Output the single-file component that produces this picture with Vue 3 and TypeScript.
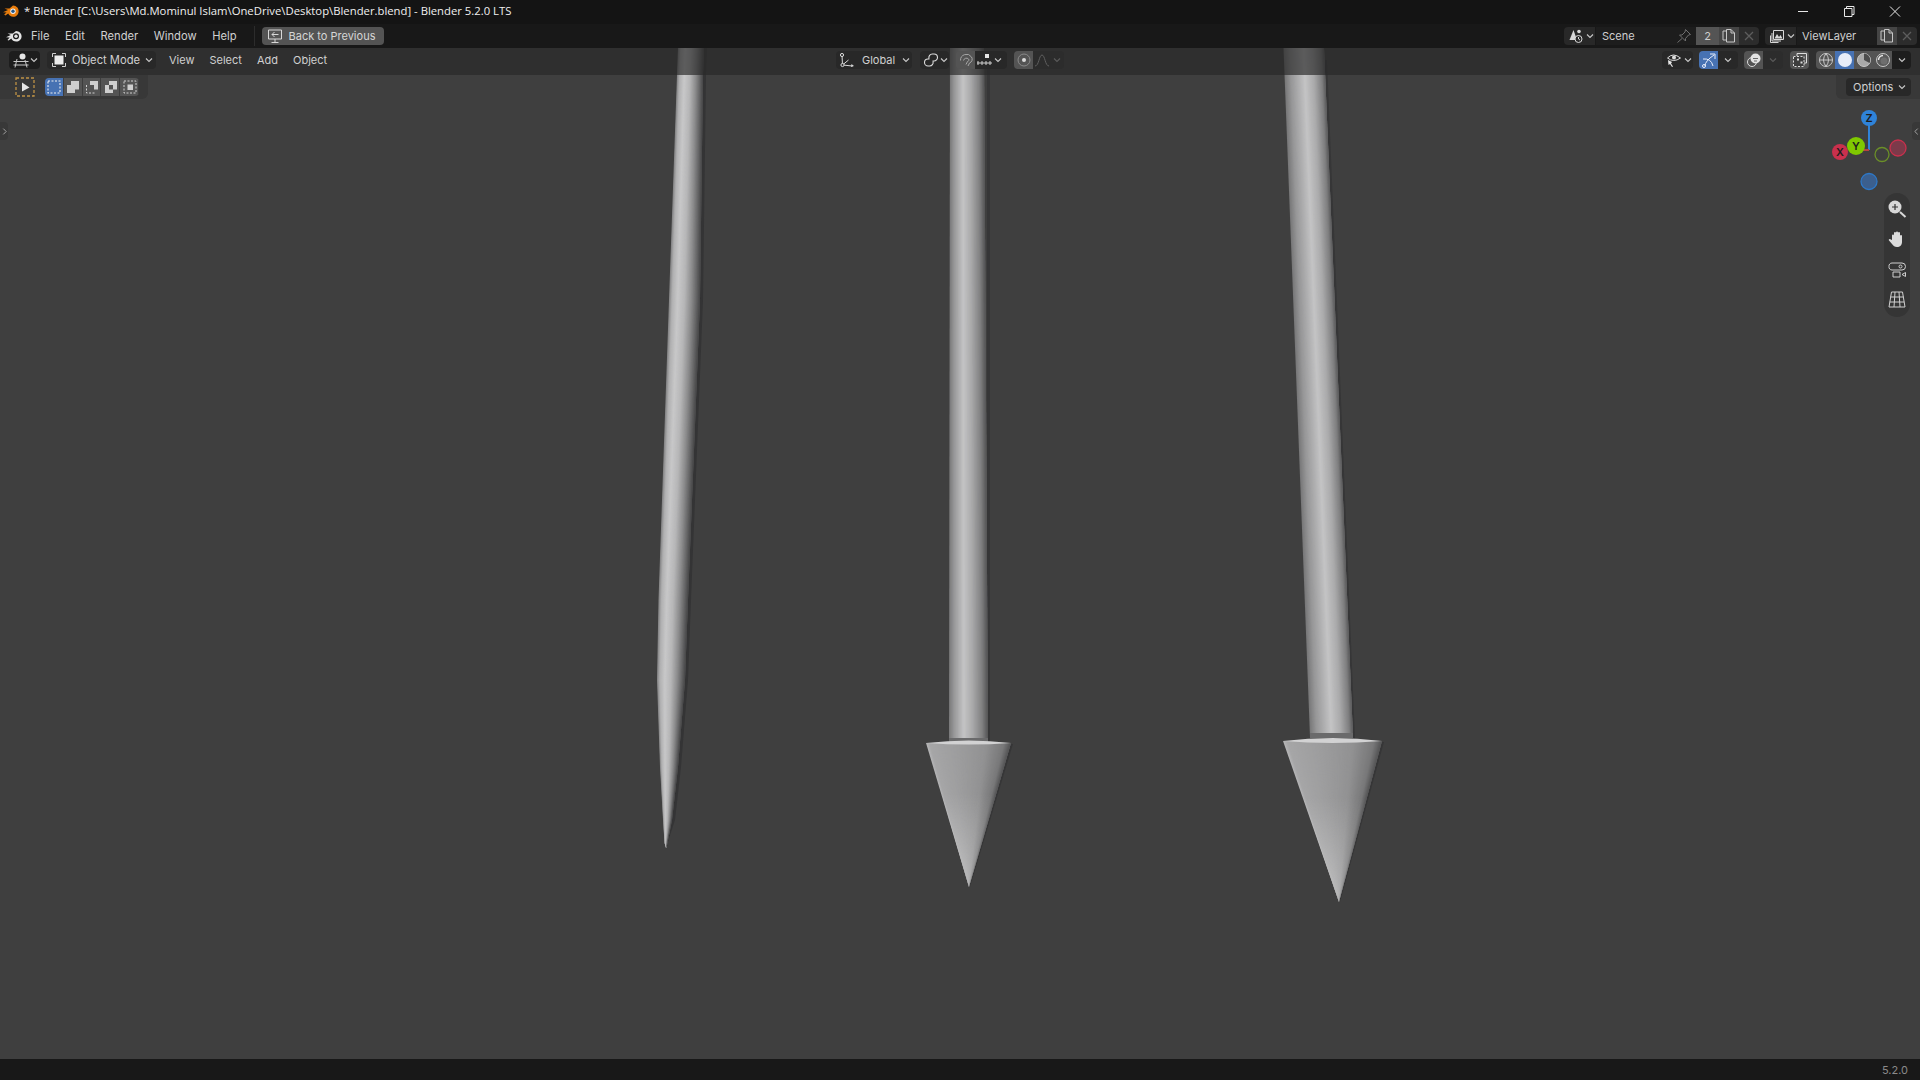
<script setup lang="ts">
type Station = [number, number, number]

const menus = ['File', 'Edit', 'Render', 'Window', 'Help']
const headerMenus = ['View', 'Select', 'Add', 'Object']
const selectModes = [0, 1, 2, 3, 4]

function grey(stops: [number, number][], t: number) {
  let v = stops[stops.length - 1][1]
  for (let i = 0; i < stops.length - 1; i++) {
    const [a, va] = stops[i]
    const [b, vb] = stops[i + 1]
    if (t >= a && t <= b) {
      v = va + ((vb - va) * (t - a)) / (b - a)
      break
    }
  }
  const n = Math.round(v)
  return `rgb(${n},${n},${n + 1})`
}

// strips overlap the next few so the seams stay hidden and the outer edge stays antialiased
function rodStrips(stations: Station[], stops: [number, number][], count = 48) {
  const out: { points: string; fill: string }[] = []
  for (let i = 0; i < count; i++) {
    const a = i / count
    const b = Math.min(1, (i + 3) / count)
    const left = stations.map(([y, l, r]) => `${(l + (r - l) * a).toFixed(2)},${y}`)
    const right = stations.map(([y, l, r]) => `${(l + (r - l) * b).toFixed(2)},${y}`).reverse()
    out.push({ points: [...left, ...right].join(' '), fill: grey(stops, a + 0.5 / count) })
  }
  return out
}

function coneStrips(topY: number, l: number, r: number, tipX: number, tipY: number, stops: [number, number][], count = 80) {
  const out: { points: string; fill: string }[] = []
  for (let i = 0; i < count; i++) {
    const a = i / count
    const b = Math.min(1, (i + 3) / count)
    out.push({
      points: `${l + (r - l) * a},${topY} ${l + (r - l) * b},${topY} ${tipX},${tipY}`,
      fill: grey(stops, a + 0.5 / count),
    })
  }
  return out
}

const rod1Stations: Station[] = [
  [48, 678, 704], [75, 677, 703], [300, 669, 700], [600, 658.5, 688],
  [680, 657, 685], [767, 660, 678], [820, 663, 672], [843, 664.5, 667.5], [848, 666, 666.5],
]
const rod2Stations: Station[] = [[48, 950, 984], [742, 949, 988]]
const rod3Stations: Station[] = [[48, 1283.5, 1324], [737, 1310, 1353]]

const rod1Shade: [number, number][] = [[0, 128], [0.1, 176], [0.28, 200], [0.5, 182], [0.72, 140], [0.9, 96], [1, 70]]
const rod2Shade: [number, number][] = [[0, 120], [0.12, 150], [0.38, 196], [0.6, 170], [0.85, 128], [1, 84]]
const rod3Shade: [number, number][] = [[0, 118], [0.15, 150], [0.5, 196], [0.72, 170], [0.92, 126], [1, 90]]
const coneShade: [number, number][] = [[0, 182], [0.04, 166], [0.4, 156], [0.7, 146], [0.92, 120], [1, 84]]

const rods = [
  ...rodStrips(rod1Stations, rod1Shade),
  ...rodStrips(rod2Stations, rod2Shade),
  ...rodStrips(rod3Stations, rod3Shade),
  ...coneStrips(743, 926, 1011, 969, 887, coneShade),
  ...coneStrips(741, 1283, 1382, 1339, 902, coneShade),
]

const rod1Shadow = [
  ...rod1Stations.map(([y, , r]) => `${r - 1},${y}`),
  ...[...rod1Stations].reverse().map(([y, , r]) => `${r + (y < 830 ? 3 : 0)},${y}`),
].join(' ')
</script>

<template>
  <div class="app">
    <div class="titlebar">
      <svg class="title-logo" viewBox="0 0 16 14">
        <path d="M0 8.200 5 6 1.500 4.400h5L10 1.600c3.600.4 5.600 2.600 5.600 5.600 0 3.200-2.400 5.600-5.400 5.600-2.400 0-4.200-1.200-5-3.200L2.400 11.400 1.200 10.600 3.600 8.400Z" fill="#e87d0d" />
        <circle cx="10" cy="7.200" r="2.700" fill="#f2f2f2" />
        <circle cx="10" cy="7.200" r="1.700" fill="#265787" />
      </svg>
      <span class="title-text">* Blender [C:\Users\Md.Mominul Islam\OneDrive\Desktop\Blender.blend] - Blender 5.2.0 LTS</span>
      <div class="win-controls">
        <svg viewBox="0 0 46 20"><path d="M18 10.500h10" stroke="#e8e8e8" fill="none" /></svg>
        <svg viewBox="0 0 46 20"><path d="M18.500 7.500h7.500v8h-7.500Z M20.500 7.500v-2h7.500v8h-2" stroke="#e8e8e8" fill="none" /></svg>
        <svg viewBox="0 0 46 20"><path d="M18 5.500l10 10M28 5.500l-10 10" stroke="#e8e8e8" fill="none" /></svg>
      </div>
    </div>

    <div class="topbar">
      <svg class="app-logo" viewBox="0 0 16 14">
        <path d="M0 8.200 4.800 6 1.600 4.500h5.200L10 2c3.400.2 5.600 2.400 5.600 5.300 0 3.100-2.400 5.300-5.400 5.300-2.300 0-4.100-1.200-4.900-3L2.600 11.600 1.500 10.900 3.700 8.400Z" fill="#e4e4e4" />
        <circle cx="10" cy="7.300" r="3" fill="#181818" />
        <circle cx="10" cy="7.300" r="1.700" fill="#e4e4e4" />
      </svg>
      <nav class="menus">
        <span v-for="m in menus" :key="m">{{ m }}</span>
      </nav>
      <i class="top-sep"></i>
      <button class="back-btn">
        <svg viewBox="0 0 16 16" class="ic16">
          <path d="M1.500 2h13v9h-13ZM8 11v3M4.500 14.500h7M11.500 6.500H5M7.500 4 5 6.500 7.500 9" fill="none" stroke="#d8d8d8" />
        </svg>
        <span>Back to Previous</span>
      </button>
      <div class="top-right">
        <div class="field-group">
          <span class="drop dark-a">
            <svg viewBox="0 0 16 16" class="ic16">
              <path d="M5.500 2 9 12H1.500Z" fill="#d8d8d8" />
              <circle cx="11" cy="3.500" r="1.800" fill="#d8d8d8" />
              <circle cx="10.500" cy="11" r="3.500" fill="#282828" stroke="#d8d8d8" />
              <path d="M10.500 9v2l1.500 1" stroke="#d8d8d8" fill="none" />
            </svg>
            <svg viewBox="0 0 8 6" class="chev"><path d="M1 1.500l3 3 3-3" /></svg>
          </span>
          <span class="name-field scene">
            <span>Scene</span>
            <svg viewBox="0 0 16 16" class="ic16 pin"><path d="M9.500 1.500 14.500 6.500 12.500 7 9.500 10.500 9.500 13 3.500 7 6 7 9 4ZM6 10.500 1.500 14.500" fill="none" stroke="#6f6f6f" /></svg>
          </span>
          <span class="tb-btn num">2</span>
          <span class="tb-btn copy">
            <svg viewBox="0 0 16 16" class="ic16"><path d="M5.500 12H2V3h3.500M5.500 1.500H10l3.500 3.500V14h-8Z M10 1.500V5h3.500" fill="none" stroke="#c8c8c8" /></svg>
          </span>
          <span class="tb-btn cross"><svg viewBox="0 0 12 12" class="ic12"><path d="M2 2l8 8M10 2l-8 8" stroke="#5d5d5d" fill="none" stroke-width="1.300" /></svg></span>
        </div>
        <div class="field-group">
          <span class="drop dark-a">
            <svg viewBox="0 0 16 16" class="ic16">
              <path d="M4.500 2.500h10v9h-10ZM3 5v8h9M1.500 7.500v7h8" fill="none" stroke="#d8d8d8" />
              <path d="M5.500 10.500 8 6l2 3 1.500-2 2 3.500Z" fill="#d8d8d8" />
            </svg>
            <svg viewBox="0 0 8 6" class="chev"><path d="M1 1.500l3 3 3-3" /></svg>
          </span>
          <span class="name-field layer"><span>ViewLayer</span></span>
          <span class="tb-btn copy">
            <svg viewBox="0 0 16 16" class="ic16"><path d="M5.500 12H2V3h3.500M5.500 1.500H10l3.500 3.500V14h-8Z M10 1.500V5h3.500" fill="none" stroke="#c8c8c8" /></svg>
          </span>
          <span class="tb-btn cross"><svg viewBox="0 0 12 12" class="ic12"><path d="M2 2l8 8M10 2l-8 8" stroke="#5d5d5d" fill="none" stroke-width="1.300" /></svg></span>
        </div>
      </div>
    </div>

    <main class="viewport">
      <svg class="scene-canvas" viewBox="0 0 1920 1011">
        <defs>
          <linearGradient id="tipGlow" x1="0" y1="0" x2="0" y2="1">
            <stop offset="0.35" stop-color="#fff" stop-opacity="0" />
            <stop offset="1" stop-color="#fff" stop-opacity="0.3" />
          </linearGradient>
        </defs>
        <g transform="translate(0 -48)">
          <polygon :points="rod1Shadow" fill="#343435" />
          <path d="M987 60V742l3 1V60ZM1323 60l29 677 3 2-28-679ZM1010 744l-41 143 1 0 43-143ZM1381 742l-42 160 1 0 44-160Z" fill="#363637" />
          <polygon v-for="(s, i) in rods" :key="i" :points="s.points" :fill="s.fill" />
          <polygon points="926,743 1011,743 969,887" fill="url(#tipGlow)" />
          <polygon points="1283,741 1382,741 1339,902" fill="url(#tipGlow)" />
          <path d="M949 738h39v4h-39ZM1310 733h43v5h-43Z" fill="#6a6a6b" />
          <path d="M926 743q43-5 85 0q-42 3-85 0Z" fill="#d2d2d3" />
          <path d="M1283 741q50-6 99 0q-50 4-99 0Z" fill="#d2d2d3" />
        </g>
      </svg>

      <header class="vp-header">
        <span class="drop dark-b editor">
          <svg viewBox="0 0 16 16" class="ic16">
            <circle cx="9.500" cy="4.500" r="3" fill="#e6e6e6" />
            <path d="M0.500 9.500h15M0.500 13h15M4 7 2 15.500M12 8l2 7.500" stroke="#c8c8c8" fill="none" />
          </svg>
          <svg viewBox="0 0 8 6" class="chev"><path d="M1 1.500l3 3 3-3" /></svg>
        </span>
        <span class="drop dark-a mode">
          <svg viewBox="0 0 16 16" class="ic16">
            <path d="M1.500 5V1.500H5M11 1.500h3.500V5M14.500 11v3.500H11M5 14.500H1.500V11" fill="none" stroke="#d0d0d0" />
            <rect x="3.500" y="3.500" width="9" height="9" fill="#ececec" />
          </svg>
          <span>Object Mode</span>
          <svg viewBox="0 0 8 6" class="chev"><path d="M1 1.500l3 3 3-3" /></svg>
        </span>
        <nav class="hd-menus">
          <span v-for="m in headerMenus" :key="m">{{ m }}</span>
        </nav>

        <div class="hd-center">
          <span class="drop dark-a orient">
            <svg viewBox="0 0 16 16" class="ic16">
              <path d="M3.500 13 3 3M3.500 13 13.500 14M3.500 13l6-5" fill="none" stroke="#d8d8d8" />
              <circle cx="3" cy="3" r="1.600" fill="#303030" stroke="#d8d8d8" />
              <circle cx="3.500" cy="13" r="1.600" fill="#303030" stroke="#d8d8d8" />
              <path d="M12.500 12l2.500 2-3 1Z" fill="#d8d8d8" />
            </svg>
            <span>Global</span>
            <svg viewBox="0 0 8 6" class="chev"><path d="M1 1.500l3 3 3-3" /></svg>
          </span>
          <span class="drop dark-a pivot">
            <svg viewBox="0 0 16 16" class="ic16">
              <path d="M6 6.500a3.500 3.500 0 0 1 3.500-4.500h1.500a3.500 3.500 0 0 1 0 7H9.500M10 9.500a3.500 3.500 0 0 1-3.500 4.500H5a3.500 3.500 0 0 1 0-7h1.500" fill="none" stroke="#dcdcdc" stroke-width="1.100" />
            </svg>
            <svg viewBox="0 0 8 6" class="chev"><path d="M1 1.500l3 3 3-3" /></svg>
          </span>
          <div class="joined">
            <span class="tg snap">
              <svg viewBox="0 0 16 16" class="ic16">
                <path d="M2.500 8.500a6 6 0 0 1 11-3.500 4 4 0 0 1-2 6l-1.500 3M5.500 8.500a3 3 0 0 1 5-1.500 1.500 1.500 0 0 1-1 2.500l-1.500 3" fill="none" stroke="#a6a6a6" />
              </svg>
            </span>
            <span class="drop dark-a snapto">
              <svg viewBox="0 0 16 16" class="ic16">
                <rect x="9" y="2" width="4" height="4" fill="#e6e6e6" />
                <path d="M1 11h15M2 9v4M6 9v4M10 9v4M14 9v4" fill="none" stroke="#d0d0d0" />
              </svg>
              <svg viewBox="0 0 8 6" class="chev"><path d="M1 1.500l3 3 3-3" /></svg>
            </span>
          </div>
          <div class="joined">
            <span class="tg prop">
              <svg viewBox="0 0 16 16" class="ic16">
                <circle cx="8" cy="8" r="6" fill="none" stroke="#8a8a8a" />
                <circle cx="8" cy="8" r="2" fill="#dcdcdc" />
              </svg>
            </span>
            <span class="drop faded falloff">
              <svg viewBox="0 0 16 16" class="ic16"><path d="M1 14c4 0 4-11 7-11s3 11 7 11" fill="none" stroke="#5f5f5f" /></svg>
              <svg viewBox="0 0 8 6" class="chev dim"><path d="M1 1.500l3 3 3-3" /></svg>
            </span>
          </div>
        </div>

        <div class="hd-right">
          <span class="drop dark-a vis">
            <svg viewBox="0 0 16 16" class="ic16">
              <path d="M1.500 6q5.500-6 13 0q-7 5-13 0Z" fill="none" stroke="#dcdcdc" />
              <circle cx="8" cy="5.500" r="2" fill="#dcdcdc" />
              <path d="M2 8l4 2-1 1.500 2 3-1 .5-2-3-1.500 1Z" fill="#e8e8e8" />
            </svg>
            <svg viewBox="0 0 8 6" class="chev"><path d="M1 1.500l3 3 3-3" /></svg>
          </span>
          <div class="joined">
            <span class="tg gizmo">
              <svg viewBox="0 0 16 16" class="ic16">
                <path d="M2 7q8-1 10 7M4 14q0-5 9-11M9 2h5v5" fill="none" stroke="#e8eefc" />
                <circle cx="3" cy="14" r="1.500" fill="none" stroke="#e8eefc" />
              </svg>
            </span>
            <span class="drop dark-a small"><svg viewBox="0 0 8 6" class="chev"><path d="M1 1.500l3 3 3-3" /></svg></span>
          </div>
          <div class="joined">
            <span class="tg overlay">
              <svg viewBox="0 0 16 16" class="ic16">
                <circle cx="6" cy="10" r="4.500" fill="none" stroke="#dcdcdc" />
                <circle cx="9.500" cy="6.500" r="5" fill="#e4e4e4" />
                <path d="M7 6.500h5M8 9h3" stroke="#6a6a6a" fill="none" />
              </svg>
            </span>
            <span class="drop faded small"><svg viewBox="0 0 8 6" class="chev dim"><path d="M1 1.500l3 3 3-3" /></svg></span>
          </div>
          <span class="tg xray">
            <svg viewBox="0 0 16 16" class="ic16">
              <path d="M5 4V1.500h9.500V11H12" fill="none" stroke="#dcdcdc" />
              <path d="M1.500 4.500h10.500v10H1.500Z" fill="#3d3d3d" stroke="#dcdcdc" stroke-dasharray="2 1.500" />
              <rect x="5" y="6.500" width="2" height="2" fill="#dcdcdc" />
              <rect x="8.500" y="9.500" width="2" height="2" fill="#dcdcdc" />
            </svg>
          </span>
          <div class="shading">
            <span class="tg shade">
              <svg viewBox="0 0 16 16" class="ic16"><circle cx="8" cy="8" r="6.500" fill="none" stroke="#c8c8c8" /><path d="M1.500 8h13M8 1.500q-5 6.500 0 13M8 1.500q5 6.500 0 13" fill="none" stroke="#c8c8c8" /></svg>
            </span>
            <span class="tg shade on"><svg viewBox="0 0 16 16" class="ic16"><circle cx="8" cy="8" r="7" fill="#e6ecf8" /></svg></span>
            <span class="tg shade">
              <svg viewBox="0 0 16 16" class="ic16"><circle cx="8" cy="8" r="6.500" fill="#a9a9a9" stroke="#c8c8c8" /><path d="M8 1.500V8l5.500 3A6.500 6.500 0 0 0 8 1.500Z" fill="#4c4c4c" /></svg>
            </span>
            <span class="tg shade">
              <svg viewBox="0 0 16 16" class="ic16"><circle cx="8" cy="8" r="6.500" fill="#5a5a5a" stroke="#c8c8c8" /><path d="M3.500 8A4.500 4.500 0 0 1 8 3.500" fill="none" stroke="#e4e4e4" stroke-width="1.500" /><circle cx="9" cy="9" r="3.500" fill="#6e6e6e" /></svg>
            </span>
            <span class="drop dark-b small"><svg viewBox="0 0 8 6" class="chev"><path d="M1 1.500l3 3 3-3" /></svg></span>
          </div>
        </div>
      </header>

      <div class="tool-row">
        <div class="tool-panel">
          <span class="select-tool">
            <svg viewBox="0 0 20 20" class="ic20">
              <rect x="1" y="1" width="18" height="18" fill="none" stroke="#bd9145" stroke-width="1.300" stroke-dasharray="3 2" />
              <path d="M7 5.500 14.500 10.500 7 14.500Z" fill="#e6e6e6" />
            </svg>
          </span>
          <div class="select-modes">
            <span v-for="m in selectModes" :key="m" class="mode-btn" :class="{ active: m === 0 }">
              <svg viewBox="0 0 16 16" class="ic16">
                <rect v-if="m === 0" x="2" y="2" width="12" height="12" fill="none" stroke="#f0f0f0" stroke-width="1.100" stroke-dasharray="2 1.500" />
                <path v-if="m === 1" d="M6 2h8v8.500H10V14H2V6h4Z" fill="#cfcfcf" />
                <template v-if="m === 2">
                  <path d="M6 2h8v8.500H10V6H6Z" fill="#cfcfcf" />
                  <path d="M2.500 6v8h8" fill="none" stroke="#cfcfcf" stroke-dasharray="2 1.500" />
                </template>
                <path v-if="m === 3" fill-rule="evenodd" d="M6 2h8v8.500H10V14H2V6h4Zm0 4v4.500h4V6Z" fill="#cfcfcf" />
                <template v-if="m === 4">
                  <rect x="2" y="2" width="12" height="12" fill="none" stroke="#cfcfcf" stroke-dasharray="2 1.500" />
                  <rect x="5.500" y="5.500" width="5.500" height="5.500" fill="#cfcfcf" />
                </template>
              </svg>
            </span>
          </div>
        </div>
        <div class="options-panel">
          <span class="drop dark-a options">
            <span>Options</span>
            <svg viewBox="0 0 8 6" class="chev"><path d="M1 1.500l3 3 3-3" /></svg>
          </span>
        </div>
      </div>

      <span class="side-tab left"><svg viewBox="0 0 6 10"><path d="M1.500 1.500 5 5 1.500 8.500" /></svg></span>
      <span class="side-tab right"><svg viewBox="0 0 6 10"><path d="M4.500 1.500 1 5 4.500 8.500" /></svg></span>

      <svg class="gizmo-ball" viewBox="0 0 80 90">
        <circle cx="65" cy="38" r="8" fill="#7c3a4a" stroke="#c9304d" stroke-width="1.300" />
        <circle cx="49" cy="44.500" r="7" fill="none" stroke="#6b8f28" stroke-width="1.300" />
        <circle cx="36" cy="71.500" r="8" fill="#3b5f8e" stroke="#2d78c8" stroke-width="1.300" />
        <path d="M36 8v32" stroke="#2f83d9" stroke-width="2" />
        <path d="M27 40h9" stroke="#b8433f" stroke-width="2" />
        <circle cx="36" cy="8" r="8" fill="#2f83d9" />
        <circle cx="7" cy="42" r="8" fill="#c9304d" />
        <circle cx="23" cy="36" r="9" fill="#7fc800" />
        <text x="36" y="12" class="axis">Z</text>
        <text x="7" y="46" class="axis">X</text>
        <text x="23" y="40" class="axis">Y</text>
      </svg>

      <div class="nav-pill">
        <svg viewBox="0 0 20 20" class="ic20">
          <circle cx="8" cy="8" r="6.500" fill="#d8d8d8" />
          <path d="M8 5v6M5 8h6" stroke="#333" stroke-width="1.200" />
          <path d="M13 13l5.500 5" stroke="#d8d8d8" stroke-width="2" />
        </svg>
        <svg viewBox="0 0 20 20" class="ic20">
          <path d="M5 11V6.500a1 1 0 0 1 2 0V4a1 1 0 0 1 2 0v-.5a1 1 0 0 1 2 0V4a1 1 0 0 1 2 0v3a1 1 0 0 1 2 0v6c0 3-2 5-5 5-2.500 0-3.500-1-5-3L2 11.500c-.8-1 .5-2 1.300-1.300Z" fill="#dcdcdc" />
        </svg>
        <svg viewBox="0 0 20 20" class="ic20">
          <path d="M2 7.500a3 3 0 0 1 3-3.500h10a3 3 0 0 1 0 7H5a3 3 0 0 1-3-3.500Z" fill="none" stroke="#d0d0d0" />
          <circle cx="13.500" cy="7.500" r="1.500" fill="none" stroke="#d0d0d0" />
          <path d="M6 13h7v5H6ZM15 15.500l3.500-2v4Z" fill="none" stroke="#d0d0d0" />
        </svg>
        <svg viewBox="0 0 20 20" class="ic20">
          <path d="M4.500 3h11l2.500 15H2ZM8 3l-1 15M12 3l1 15M3.500 8h13M2.800 13h14.400" fill="none" stroke="#d0d0d0" />
        </svg>
      </div>
    </main>

    <footer class="statusbar">5.2.0</footer>
  </div>
</template>

<style>
html,
body {
  margin: 0;
  background: #181818;
}
</style>

<style scoped>
.app {
  display: flex;
  flex-direction: column;
  width: 1920px;
  height: 1080px;
  overflow: hidden;
  font-family: Inter, "Liberation Sans", sans-serif;
  font-size: 11px;
  color: #d0d0d0;
  background: #181818;
  white-space: nowrap;
}
svg {
  display: block;
  flex: none;
}
.ic16 { width: 16px; height: 16px; }
.ic12 { width: 12px; height: 12px; }
.ic20 { width: 20px; height: 20px; }
.chev {
  width: 8px;
  height: 6px;
  fill: none;
  stroke: #c8c8c8;
  stroke-width: 1.100;
}
.chev.dim { stroke: #5a5a5a; }

.titlebar {
  display: flex;
  align-items: center;
  height: 21px;
  padding: 0 0 0 3px;
  margin-bottom: 3px;
  background: #141414;
  box-shadow: 0 3px 0 #141414;
  font-family: "Open Sans", "Noto Sans", sans-serif;
  font-size: 11.3px;
  color: #f0f0f0;
}
.title-logo { width: 16px; height: 14px; margin-right: 5px; }
.win-controls {
  display: flex;
  margin-left: auto;
  margin-right: 2px;
}
.win-controls svg { width: 46px; height: 20px; }

.topbar {
  display: flex;
  align-items: center;
  height: 24px;
  background: #181818;
  padding-left: 6px;
}
.app-logo { width: 16px; height: 14px; }
.menus {
  display: flex;
  gap: 15.500px;
  margin-left: 9px;
  font-size: 11.200px;
}
.top-sep {
  width: 1px;
  height: 20px;
  background: #2c2c2c;
  margin-left: 17px;
}
.back-btn {
  display: flex;
  align-items: center;
  gap: 6px;
  width: 122px;
  height: 18px;
  margin-left: 7px;
  padding: 0 0 0 5px;
  border: 0;
  border-radius: 4px;
  background: #545454;
  font: inherit;
  color: #d6d6d6;
}
.top-right {
  display: flex;
  gap: 6px;
  margin-left: auto;
  margin-right: 3px;
}
.field-group {
  display: flex;
  align-items: center;
  height: 18px;
  border-radius: 4px;
  overflow: hidden;
}
.drop {
  display: flex;
  align-items: center;
  height: 18px;
  border-radius: 4px;
  box-sizing: border-box;
}
.dark-a { background: #282828; }
.dark-b { background: #1d1d1d; }
.faded { background: #2c2c2c; }
.field-group .drop {
  width: 31px;
  gap: 2px;
  padding-left: 4px;
  border-radius: 0;
}
.name-field {
  display: flex;
  align-items: center;
  justify-content: space-between;
  height: 18px;
  box-sizing: border-box;
  padding: 0 4px 0 6px;
  margin-left: 1px;
  background: #1d1d1d;
}
.scene { width: 100px; }
.layer { width: 80px; padding-left: 5px; }
.tb-btn {
  display: flex;
  align-items: center;
  justify-content: center;
  height: 18px;
  width: 20px;
}
.num { width: 23px; background: #545454; }
.copy { background: #454545; }
.cross { background: #2c2c2c; }

.viewport {
  position: relative;
  flex: 1;
  background: #3f3f3f;
  overflow: hidden;
}
.scene-canvas {
  position: absolute;
  inset: 0;
  width: 1920px;
  height: 1011px;
}
.vp-header {
  position: relative;
  display: flex;
  align-items: flex-start;
  height: 27px;
  box-sizing: border-box;
  padding: 3px 0 0 9px;
  background: rgba(41, 41, 41, 0.67);
}
.editor { width: 31px; padding-left: 4px; gap: 1px; }
.mode {
  width: 109px;
  margin-left: 7px;
  padding: 0 4px 0 4px;
  gap: 5px;
  font-size: 11.200px;
}
.mode span { flex: 1; }
.hd-menus {
  display: flex;
  align-items: center;
  height: 18px;
  gap: 15px;
  margin-left: 13px;
}
.hd-center {
  position: absolute;
  left: 836px;
  top: 3px;
  display: flex;
  align-items: center;
}
.orient {
  width: 76px;
  padding: 0 6px 0 3px;
  gap: 7px;
}
.orient span { flex: 1; }
.pivot {
  width: 29px;
  margin-left: 8px;
  padding-left: 3px;
  gap: 1px;
}
.joined {
  display: flex;
  align-items: center;
}
.joined .tg { border-radius: 4px 0 0 4px; }
.joined .drop { border-radius: 0 4px 4px 0; }
.hd-center .joined { margin-left: 7px; }
.tg {
  display: flex;
  align-items: center;
  justify-content: center;
  width: 19px;
  height: 18px;
  background: #545454;
  border-radius: 4px;
}
.snapto { width: 32px; padding-left: 1px; gap: 2px; }
.falloff { width: 31px; padding-left: 1px; gap: 3px; }
.hd-right {
  position: absolute;
  right: 9px;
  top: 3px;
  display: flex;
  align-items: center;
}
.vis {
  width: 31px;
  padding-left: 4px;
  gap: 2px;
}
.hd-right .joined { margin-left: 6px; }
.gizmo { background: #4772b3; }
.small {
  width: 20px;
  justify-content: center;
}
.xray { margin-left: 7px; }
.shading {
  display: flex;
  align-items: center;
  margin-left: 7px;
}
.shade {
  border-radius: 0;
  width: 19px;
}
.shade:first-child { border-radius: 4px 0 0 4px; }
.shade.on { background: #4772b3; }
.shading .drop { border-radius: 0 4px 4px 0; width: 19px; }

.tool-row {
  position: relative;
  display: flex;
  justify-content: space-between;
  height: 24px;
}
.tool-panel {
  display: flex;
  align-items: center;
  width: 148px;
  box-sizing: border-box;
  padding-left: 15px;
  background: #383838;
  border-radius: 0 0 6px 0;
}
.select-modes {
  display: flex;
  margin-left: 10px;
  border-radius: 4px;
  overflow: hidden;
}
.mode-btn {
  display: flex;
  align-items: center;
  justify-content: center;
  width: 18.800px;
  height: 18px;
  background: #545454;
  box-shadow: inset -1px 0 0 #3d3d3d;
}
.mode-btn.active { background: #4772b3; }
.options-panel {
  display: flex;
  align-items: center;
  width: 84px;
  box-sizing: border-box;
  padding-left: 10px;
  background: #383838;
  border-radius: 0 0 0 6px;
}
.options {
  width: 65px;
  justify-content: space-between;
  padding: 0 5px 0 7px;
}

.side-tab {
  position: absolute;
  top: 74px;
  display: flex;
  align-items: center;
  justify-content: center;
  width: 8px;
  height: 18px;
  background: #383838;
}
.side-tab svg {
  width: 5px;
  height: 9px;
  fill: none;
  stroke: #b8b8b8;
}
.side-tab.left { left: 0; border-radius: 0 4px 4px 0; }
.side-tab.right { right: 0; border-radius: 4px 0 0 4px; }

.gizmo-ball {
  position: absolute;
  left: 1833px;
  top: 62px;
  width: 80px;
  height: 90px;
  overflow: visible;
}
.axis {
  font-family: Inter, "Liberation Sans", sans-serif;
  font-size: 11px;
  font-weight: 600;
  fill: #1d1d1d;
  text-anchor: middle;
}
.nav-pill {
  position: absolute;
  left: 1884px;
  top: 145px;
  display: flex;
  flex-direction: column;
  align-items: center;
  justify-content: space-between;
  width: 26px;
  height: 124px;
  box-sizing: border-box;
  padding: 6px 0 8px;
  border-radius: 13px;
  background: #353535;
}

.statusbar {
  display: flex;
  align-items: center;
  justify-content: flex-end;
  height: 21px;
  padding-right: 12px;
  background: #181818;
  color: #8a8a8a;
}
</style>
